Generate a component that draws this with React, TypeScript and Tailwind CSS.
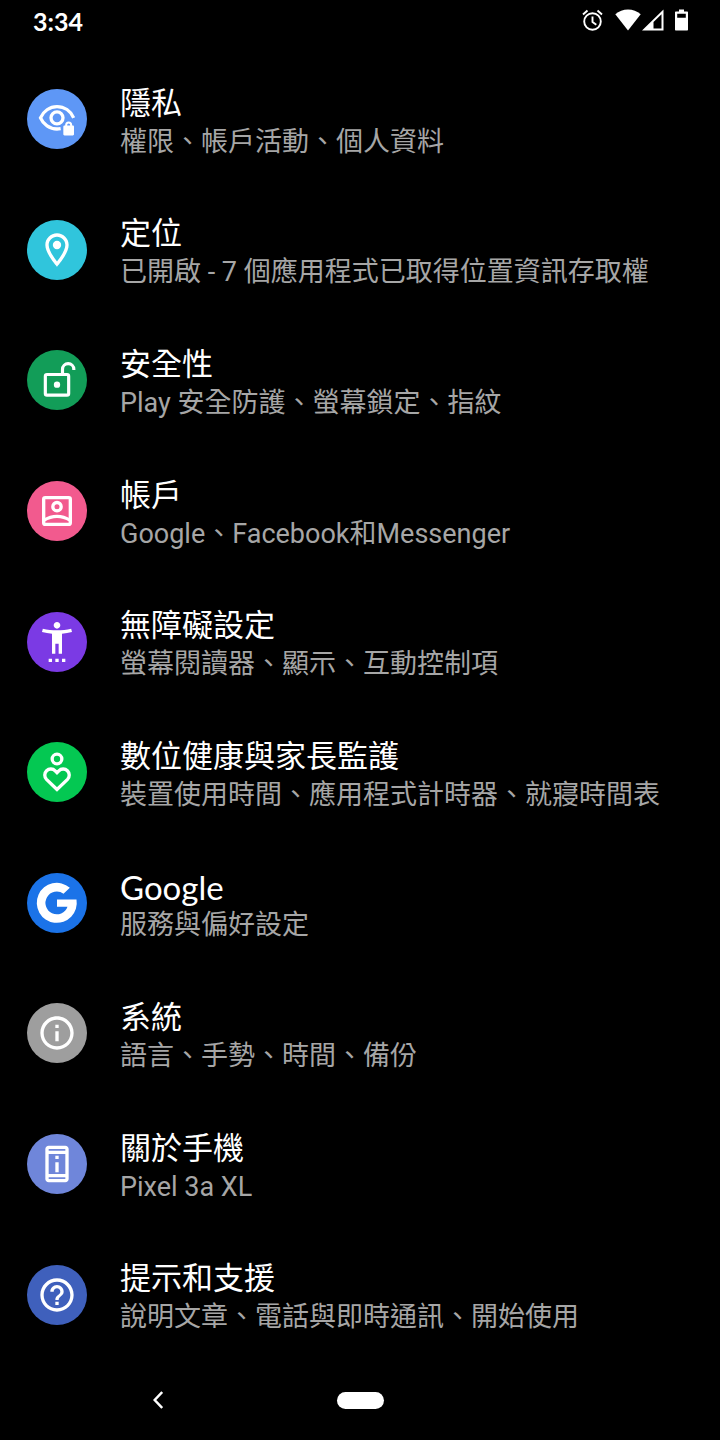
import type { ReactNode } from 'react';

type Setting = {
  title: string;
  summary: string;
  color: string;
  icon: ReactNode;
  latin?: boolean;
};

const settings: Setting[] = [
  {
    title: '隱私',
    summary: '權限、帳戶活動、個人資料',
    color: 'bg-[#5e97f6]',
    icon: (
      <>
        <g fill="none" stroke="currentColor" strokeWidth="2">
          <path d="M22 11.3C20.2 7.3 16.4 4.6 12 4.6S3.8 7.3 2.1 11.3C3.8 15.3 7.6 18 12 18c.8 0 1.5-.1 2.2-.2" />
          <circle cx="12" cy="11.3" r="3.6" />
        </g>
        <path
          fillRule="evenodd"
          d="M16.9 15.9v-.3a2.1 2.1 0 0 1 4.2 0v.3h.4c.4 0 .7.3.7.7v4.6c0 .4-.3.7-.7.7h-5c-.4 0-.7-.3-.7-.7v-4.6c0-.4.3-.7.7-.7zm1.2 0h1.8v-.3a.9.9 0 0 0-1.8 0z"
        />
      </>
    ),
  },
  {
    title: '定位',
    summary: '已開啟 - 7 個應用程式已取得位置資訊存取權',
    color: 'bg-[#30c5dc]',
    icon: (
      <>
        <path d="M12 2C8.13 2 5 5.13 5 9c0 5.25 7 13 7 13s7-7.75 7-13c0-3.87-3.13-7-7-7zM7 9c0-2.76 2.24-5 5-5s5 2.24 5 5c0 2.88-2.88 7.19-5 9.88C9.92 16.21 7 11.85 7 9z" />
        <circle cx="12" cy="9" r="2.5" />
      </>
    ),
  },
  {
    title: '安全性',
    summary: 'Play 安全防護、螢幕鎖定、指紋',
    color: 'bg-[#129d58]',
    icon: (
      <>
        <g fill="none" stroke="currentColor" strokeWidth="1.9">
          <rect x="5" y="8.7" width="14" height="12.4" rx="1" />
          <path d="M15.3 8.7V5.6a3.4 3.4 0 0 1 6.8 0v.4" />
        </g>
        <circle cx="12" cy="14.8" r="1.9" />
      </>
    ),
  },
  {
    title: '帳戶',
    summary: 'Google、Facebook和Messenger',
    color: 'bg-[#f25a8e]',
    icon: (
      <g fill="none" stroke="currentColor" strokeWidth="2">
        <rect x="4" y="4" width="16" height="16" rx="1" />
        <circle cx="12" cy="9.4" r="2.5" />
        <path d="M4 17.6Q12 12.8 20 17.6" />
      </g>
    ),
  },
  {
    title: '無障礙設定',
    summary: '螢幕閱讀器、顯示、互動控制項',
    color: 'bg-[#7b3ae4]',
    icon: (
      <path d="M20.500 4c-2.610.700-5.670 1-8.500 1s-5.890-.3-8.500-1L3 6c1.860.500 4 .83 6 1v12h2v-6h2v6h2V7c2-.17 4.140-.5 6-1l-.5-2zM12 4c1.100 0 2-.9 2-2s-.9-2-2-2-2 .9-2 2 .9 2 2 2zM7 24h2v-2H7v2zm4 0h2v-2h-2v2zm4 0h2v-2h-2v2z" />
    ),
  },
  {
    title: '數位健康與家長監護',
    summary: '裝置使用時間、應用程式計時器、就寢時間表',
    color: 'bg-[#04c852]',
    icon: (
      <g fill="none" stroke="currentColor" strokeWidth="2">
        <circle cx="12" cy="4.2" r="2.9" />
        <path d="M12 22.5l-6.3-6.1a3.6 3.6 0 0 1 5.2-5.1L12 12.4l1.1-1.1a3.6 3.6 0 0 1 5.2 5.1z" />
      </g>
    ),
  },
  {
    title: 'Google',
    summary: '服務與偏好設定',
    color: 'bg-[#1b73e8]',
    latin: true,
    icon: <path d="M19.700 2.800A12 12 0 1 0 23.700 9.900H12v4.300h6.300A6.800 6.800 0 1 1 15.900 6.500z" />,
  },
  {
    title: '系統',
    summary: '語言、手勢、時間、備份',
    color: 'bg-[#9e9e9e]',
    icon: (
      <path d="M11 7h2v2h-2zm0 4h2v6h-2zm1-9C6.48 2 2 6.48 2 12s4.48 10 10 10 10-4.48 10-10S17.52 2 12 2zm0 18c-4.41 0-8-3.59-8-8s3.59-8 8-8 8 3.59 8 8-3.59 8-8 8z" />
    ),
  },
  {
    title: '關於手機',
    summary: 'Pixel 3a XL',
    color: 'bg-[#6f86da]',
    icon: (
      <path d="M13 7h-2v2h2V7zm0 4h-2v6h2v-6zm4-9.99L7 1c-1.1 0-2 .9-2 2v18c0 1.1.9 2 2 2h10c1.1 0 2-.9 2-2V3c0-1.1-.9-1.99-2-1.99zM17 21H7v-1h10v1zm0-3H7V6h10v12zm0-14H7V3h10v1z" />
    ),
  },
  {
    title: '提示和支援',
    summary: '說明文章、電話與即時通訊、開始使用',
    color: 'bg-[#3f60bc]',
    icon: (
      <path d="M11 18h2v-2h-2v2zm1-16C6.48 2 2 6.48 2 12s4.48 10 10 10 10-4.48 10-10S17.52 2 12 2zm0 18c-4.41 0-8-3.59-8-8s3.59-8 8-8 8 3.59 8 8-3.59 8-8 8zm0-14c-2.21 0-4 1.79-4 4h2c0-1.1.9-2 2-2s2 .9 2 2c0 2-3 1.75-3 5h2c0-2.25 3-2.5 3-5 0-2.21-1.79-4-4-4z" />
    ),
  },
];

const StatusBar = () => (
  <header className="flex h-[54px] items-start justify-between pl-[33px] pr-8 pt-2">
    <time className="font-['Lato'] text-[25px] font-bold leading-[26px]">3:34</time>
    <div className="flex items-center pt-px">
      {/* Alarm */}
      <svg viewBox="0 0 21 22" className="mr-3 h-[22px] w-[21px]" fill="none" stroke="currentColor">
        <circle cx="10.5" cy="12.5" r="8.3" strokeWidth="1.9" />
        <path d="M10.5 7.5v5.500l3.800 2.800M1 5.500L5.500 1.500M20 5.500L15.500 1.500" strokeWidth="1.9" />
      </svg>
      {/* Wi-Fi */}
      <svg viewBox="0 0 26 22" className="mr-px h-[22px] w-[26px]" fill="currentColor">
        <path d="M13 21.5L.3 5.2C3.8 2.2 8.3.5 13 .5s9.2 1.7 12.700 4.700z" />
      </svg>
      {/* Mobile signal */}
      <svg viewBox="0 0 22 22" className="mr-[11px] h-[22px] w-[22px]" fill="currentColor">
        <path fillRule="evenodd" d="M0 21.5L21.5.5v21zM11.5 13v6.500h8V5.200z" />
      </svg>
      {/* Battery */}
      <svg viewBox="0 0 13 22" className="h-[22px] w-[13px]" fill="currentColor">
        <path
          fillRule="evenodd"
          d="M4 .5h5v2h3c.6 0 1 .4 1 1v17c0 .6-.4 1-1 1H1c-.6 0-1-.4-1-1v-17c0-.6.4-1 1-1h3zM2.200 4.700v4h8.600v-4z"
        />
      </svg>
    </div>
  </header>
);

const SettingRow = ({ title, summary, color, icon, latin }: Setting) => (
  <li className="flex flex-1">
    <button type="button" className="flex w-full items-center gap-[33px] px-[27px] text-left">
      <span className={`flex size-[60px] shrink-0 items-center justify-center rounded-full ${color}`}>
        <svg viewBox="0 0 24 24" className="size-10 overflow-visible" fill="currentColor" aria-hidden="true">
          {icon}
        </svg>
      </span>
      <span className="flex min-w-0 flex-col pt-[5px]">
        <span className={`leading-10 ${latin ? "font-['Lato'] text-[33px]" : 'text-[31px]'}`}>{title}</span>
        <span className="text-[27px] leading-9 text-[#a6a6a6]">{summary}</span>
      </span>
    </button>
  </li>
);

const NavigationBar = () => (
  <nav className="grid h-20 grid-cols-9 items-center">
    <button type="button" aria-label="返回" className="col-span-4 flex justify-center pr-1">
      <svg viewBox="0 0 10 18" className="h-[18px] w-[10px]" fill="none" stroke="currentColor" strokeWidth="2.5">
        <path d="M9.200 1L1.700 9l7.500 8" />
      </svg>
    </button>
    <button type="button" aria-label="主畫面" className="h-[17px] w-[47px] justify-self-center rounded-full bg-white" />
  </nav>
);

export default function App() {
  return (
    <div
      lang="zh-Hant-TW"
      className="flex min-h-screen flex-col bg-black font-['Roboto','Noto_Sans_CJK_TC',sans-serif] text-white"
    >
      <StatusBar />
      <main className="flex flex-1 flex-col">
        <ul className="flex flex-1 flex-col">
          {settings.map((setting) => (
            <SettingRow key={setting.title} {...setting} />
          ))}
        </ul>
      </main>
      <NavigationBar />
    </div>
  );
}
